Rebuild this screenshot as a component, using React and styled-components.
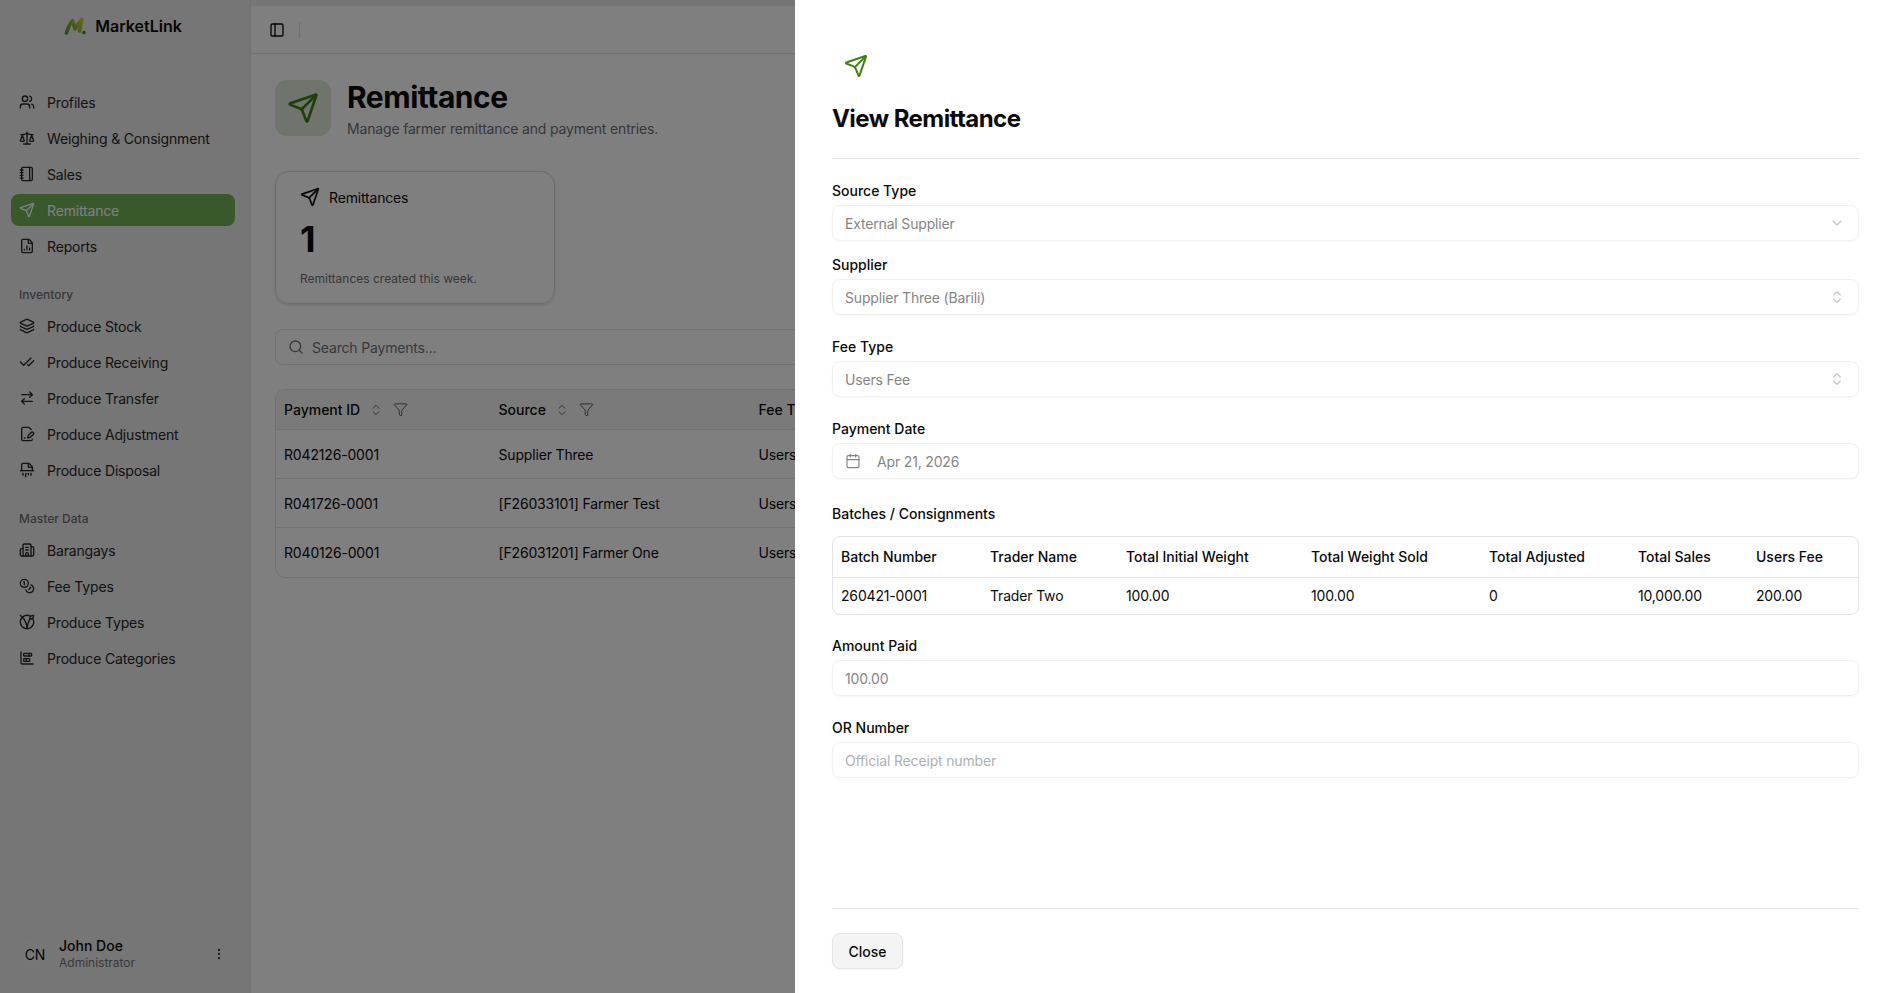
import React from 'react'
import styled, { createGlobalStyle } from 'styled-components'
import {
  ArrowRightLeft,
  Building2,
  Calendar,
  ChartBarStacked,
  CheckCheck,
  ChevronDown,
  ChevronsUpDown,
  Coins,
  EllipsisVertical,
  FileChartColumn,
  FilePenLine,
  Funnel,
  Layers,
  Notebook,
  PanelLeft,
  Scale,
  Search,
  Send,
  Shredder,
  Users,
  Vegan,
} from 'lucide-react'

const GlobalStyle = createGlobalStyle`
  html, body {
    margin: 0;
    height: 100%;
    overflow: hidden;
    background: #fff;
    color: #0a0a0a;
    font-family: Inter, "Liberation Sans", sans-serif;
    font-size: 14px;
    letter-spacing: -0.17px;
  }
  * {
    box-sizing: border-box;
  }
`

const green = '#3f7f14'

const Page = styled.div`
  display: flex;
  height: 100vh;
  background: #ececec;
`

const Sidebar = styled.aside`
  display: flex;
  flex-direction: column;
  flex: 0 0 251px;
  padding: 0 15px 0 11px;
  border-right: 1px solid #e4e4e4;
`

const Brand = styled.div`
  display: flex;
  align-items: center;
  justify-content: center;
  gap: 9px;
  height: 52px;
  margin-bottom: 34px;
  font-size: 16px;
  font-weight: 600;
  letter-spacing: 0;
`

const NavGroup = styled.nav`
  display: flex;
  flex-direction: column;
  gap: 4px;
  margin-bottom: ${(p) => p.$gap || 16}px;
`

const GroupLabel = styled.div`
  display: flex;
  align-items: center;
  height: 32px;
  padding-left: 8px;
  font-size: 12px;
  font-weight: 500;
  letter-spacing: 0;
  color: #6f6f76;
`

const NavItem = styled.a`
  display: flex;
  align-items: center;
  gap: 12px;
  height: 32px;
  padding-left: 8px;
  border-radius: 8px;
  font-size: 14px;
  color: ${(p) => (p.$active ? '#fff' : '#27272a')};
  background: ${(p) => (p.$active ? '#74b257' : 'transparent')};
`

const UserRow = styled.div`
  display: flex;
  align-items: center;
  height: 48px;
  margin-top: auto;
  margin-bottom: 15px;
  padding: 0 8px;
`

const Avatar = styled.div`
  display: flex;
  align-items: center;
  justify-content: center;
  flex: 0 0 32px;
  height: 32px;
  margin-right: 8px;
  border-radius: 50%;
  background: #eeeeee;
  font-size: 14px;
`

const UserText = styled.div`
  display: flex;
  flex-direction: column;
  flex: 1;
`

const UserName = styled.span`
  font-size: 14px;
  font-weight: 500;
  line-height: 18px;
  letter-spacing: 0;
`

const UserRole = styled.span`
  font-size: 12px;
  line-height: 16px;
  letter-spacing: 0;
  color: #71717a;
`

const MoreButton = styled.span`
  display: flex;
  margin-right: 1px;
  color: #3f3f46;
`

const Main = styled.main`
  display: flex;
  flex-direction: column;
  flex: 1;
  min-width: 0;
  margin-top: 6px;
  background: #fff;
`

const Topbar = styled.header`
  display: flex;
  align-items: center;
  flex: 0 0 48px;
  padding-left: 18px;
  border-bottom: 1px solid #e4e4e7;
`

const Separator = styled.span`
  width: 1px;
  height: 16px;
  margin-left: 14px;
  background: #e4e4e7;
`

const Content = styled.div`
  display: flex;
  flex-direction: column;
  padding: 26px 24px 0;
`

const PageHead = styled.div`
  display: flex;
  gap: 16px;
  height: 56px;
  margin-bottom: 35px;
`

const PageIcon = styled.div`
  display: flex;
  align-items: center;
  justify-content: center;
  flex: 0 0 56px;
  border-radius: 12px;
  background: #dfe8d8;
  color: ${green};
`

const PageTitle = styled.h1`
  margin: -1px 0 0;
  font-size: 30px;
  font-weight: 700;
  line-height: 36px;
  letter-spacing: -0.48px;
`

const PageSub = styled.p`
  margin: 4px 0 0;
  font-size: 14px;
  line-height: 20px;
  color: #6f6f76;
`

const StatCard = styled.section`
  display: flex;
  flex-direction: column;
  width: 280px;
  height: 133px;
  margin-bottom: 25px;
  padding: 15px 24px;
  border: 1.5px solid #dcdcde;
  border-radius: 14px;
  box-shadow: 0 1px 3px rgba(0, 0, 0, 0.14);
`

const StatHead = styled.div`
  display: flex;
  align-items: center;
  gap: 9px;
  height: 20px;
`

const StatValue = styled.div`
  margin-top: 12px;
  font-size: 36px;
  font-weight: 700;
  line-height: 40px;
`

const StatNote = styled.div`
  margin-top: 12px;
  font-size: 12px;
  line-height: 16px;
  letter-spacing: 0;
  color: #6f6f76;
`

const SearchBox = styled.div`
  display: flex;
  align-items: center;
  gap: 8px;
  height: 36px;
  margin-bottom: 24px;
  padding-left: 12px;
  border: 1px solid #e4e4e7;
  border-radius: 8px;
  color: #71717a;
`

const DataTable = styled.div`
  overflow: hidden;
  border: 1px solid #e4e4e7;
  border-radius: 10px;
`

const DataRow = styled.div`
  display: grid;
  grid-template-columns: 214.5px 260px 1fr;
  align-items: center;
  height: ${(p) => (p.$head ? 40 : 49)}px;
  border-bottom: ${(p) => (p.$last ? 0 : 1)}px solid #e4e4e7;
  background: ${(p) => (p.$head ? '#f5f5f5' : 'transparent')};
  font-weight: ${(p) => (p.$head ? 500 : 400)};
  letter-spacing: ${(p) => (p.$head ? '0' : '-0.17px')};
`

const DataCell = styled.div`
  display: flex;
  align-items: center;
  padding-left: 8px;
  white-space: nowrap;
`

const HeadIcons = styled.span`
  display: inline-flex;
  align-items: center;
  gap: 10px;
  margin-left: 9px;
  color: #52525b;
`

const Backdrop = styled.div`
  position: fixed;
  inset: 0;
  background: rgba(0, 0, 0, 0.5);
`

const Sheet = styled.aside`
  position: fixed;
  top: 0;
  right: 0;
  bottom: 0;
  display: flex;
  flex-direction: column;
  width: 1100px;
  padding: 42px 36px 24px 37px;
  background: #fff;
`

const SheetHead = styled.div`
  display: flex;
  flex-direction: column;
  padding-bottom: 23px;
  border-bottom: 1px solid #e4e4e7;
`

const SheetIcon = styled.div`
  display: flex;
  align-items: center;
  justify-content: center;
  width: 48px;
  height: 48px;
  color: ${green};
`

const SheetTitle = styled.h2`
  margin: 13px 0 0;
  font-size: 24px;
  font-weight: 700;
  line-height: 32px;
  letter-spacing: -0.56px;
`

const Form = styled.div`
  display: flex;
  flex-direction: column;
  flex: 1;
  padding-top: 24px;
`

const Field = styled.div`
  display: flex;
  flex-direction: column;
  gap: 7px;
  padding-top: 1px;
  margin-bottom: ${(p) => p.$gap}px;
`

const FieldLabel = styled.label`
  font-size: 14px;
  font-weight: 500;
  line-height: 14px;
  letter-spacing: 0;
`

const Control = styled.div`
  display: flex;
  align-items: center;
  justify-content: space-between;
  height: 36px;
  padding: 0 13px 0 12px;
  border: 1px solid #f1f1f2;
  border-radius: 8px;
  box-shadow: 0 1px 2px rgba(0, 0, 0, 0.03);
  color: ${(p) => (p.$placeholder ? '#b0b0b4' : '#858585')};
`

const ControlIcon = styled.span`
  display: flex;
  color: #c4c4c4;
`

const DateValue = styled.span`
  display: flex;
  align-items: center;
  gap: 16px;
`

const SectionLabel = styled.div`
  margin-top: 1px;
  margin-bottom: 12px;
  font-size: 14px;
  font-weight: 500;
  line-height: 20px;
  letter-spacing: 0;
`

const BatchWrap = styled.div`
  margin-bottom: 23px;
  overflow: hidden;
  border: 1px solid #e4e4e7;
  border-radius: 8px;
`

const BatchTable = styled.table`
  width: 100%;
  border-collapse: collapse;
  table-layout: fixed;
`

const BatchHead = styled.th`
  height: 40px;
  padding: 0 8px;
  border-bottom: 1px solid #e4e4e7;
  font-size: 14px;
  font-weight: 500;
  letter-spacing: 0;
  text-align: left;
`

const BatchCell = styled.td`
  height: 37px;
  padding: 0 8px;
  font-size: 14px;
`

const SheetFoot = styled.div`
  padding-top: 24px;
  border-top: 1px solid #e4e4e7;
`

const CloseButton = styled.button`
  width: 71px;
  height: 36px;
  border: 1px solid #e4e4e7;
  border-radius: 8px;
  background: #f4f4f5;
  box-shadow: 0 1px 2px rgba(0, 0, 0, 0.05);
  color: #0a0a0a;
  font-family: inherit;
  font-size: 14px;
  font-weight: 500;
  letter-spacing: 0;
`

const mainNav = [
  [Users, 'Profiles'],
  [Scale, 'Weighing & Consignment'],
  [Notebook, 'Sales'],
  [Send, 'Remittance', true],
  [FileChartColumn, 'Reports'],
]

const inventoryNav = [
  [Layers, 'Produce Stock'],
  [CheckCheck, 'Produce Receiving'],
  [ArrowRightLeft, 'Produce Transfer'],
  [FilePenLine, 'Produce Adjustment'],
  [Shredder, 'Produce Disposal'],
]

const masterNav = [
  [Building2, 'Barangays'],
  [Coins, 'Fee Types'],
  [Vegan, 'Produce Types'],
  [ChartBarStacked, 'Produce Categories'],
]

const payments = [
  ['R042126-0001', 'Supplier Three', 'Users Fee'],
  ['R041726-0001', '[F26033101] Farmer Test', 'Users Fee'],
  ['R040126-0001', '[F26031201] Farmer One', 'Users Fee'],
]

const batchColumns = [
  ['Batch Number', '260421-0001', 149],
  ['Trader Name', 'Trader Two', 136],
  ['Total Initial Weight', '100.00', 185],
  ['Total Weight Sold', '100.00', 178],
  ['Total Adjusted', '0', 149],
  ['Total Sales', '10,000.00', 118],
  ['Users Fee', '200.00', 110],
]

function Logo() {
  return (
    <svg width="22" height="18" viewBox="0 0 22 18" fill="none">
      <defs>
        <linearGradient id="logoFill" x1="0" y1="1" x2="1" y2="0">
          <stop offset="0" stopColor="#4c9c3c" />
          <stop offset="0.55" stopColor="#8fb83a" />
          <stop offset="1" stopColor="#dcc83a" />
        </linearGradient>
      </defs>
      <path
        d="M2.5 16 C4 11 6 6 8.5 3.5 C9.5 7 10.5 10 11 12 C13 9 15 5 18 2.5 C17 7 16 10 15.5 14"
        stroke="url(#logoFill)"
        strokeWidth="3.6"
        strokeLinecap="round"
        strokeLinejoin="round"
      />
      <circle cx="20" cy="15.5" r="1.8" fill="#3f8a2a" />
    </svg>
  )
}

function NavList({ items, gap }) {
  return (
    <NavGroup $gap={gap}>
      {items.map(([Icon, label, active]) => (
        <NavItem key={label} $active={active}>
          <Icon size={16} />
          {label}
        </NavItem>
      ))}
    </NavGroup>
  )
}

function HeadCell({ label, icons }) {
  return (
    <DataCell>
      {label}
      {icons && (
        <HeadIcons>
          <ChevronsUpDown size={14} strokeWidth={1.5} />
          <Funnel size={15} strokeWidth={1.5} />
        </HeadIcons>
      )}
    </DataCell>
  )
}

function SelectField({ label, value, icon: Icon, gap }) {
  return (
    <Field $gap={gap}>
      <FieldLabel>{label}</FieldLabel>
      <Control>
        {value}
        <ControlIcon>
          <Icon size={16} strokeWidth={1.75} />
        </ControlIcon>
      </Control>
    </Field>
  )
}

export default function App() {
  return (
    <>
      <GlobalStyle />
      <Page>
        <Sidebar>
          <Brand>
            <Logo />
            MarketLink
          </Brand>
          <NavList items={mainNav} />
          <GroupLabel>Inventory</GroupLabel>
          <NavList items={inventoryNav} />
          <GroupLabel>Master Data</GroupLabel>
          <NavList items={masterNav} gap={1} />
          <UserRow>
            <Avatar>CN</Avatar>
            <UserText>
              <UserName>John Doe</UserName>
              <UserRole>Administrator</UserRole>
            </UserText>
            <MoreButton>
              <EllipsisVertical size={14} />
            </MoreButton>
          </UserRow>
        </Sidebar>
        <Main>
          <Topbar>
            <PanelLeft size={16} />
            <Separator />
          </Topbar>
          <Content>
            <PageHead>
              <PageIcon>
                <Send size={32} />
              </PageIcon>
              <div>
                <PageTitle>Remittance</PageTitle>
                <PageSub>Manage farmer remittance and payment entries.</PageSub>
              </div>
            </PageHead>
            <StatCard>
              <StatHead>
                <Send size={20} />
                Remittances
              </StatHead>
              <StatValue>1</StatValue>
              <StatNote>Remittances created this week.</StatNote>
            </StatCard>
            <SearchBox>
              <Search size={16} />
              Search Payments...
            </SearchBox>
            <DataTable>
              <DataRow $head>
                <HeadCell label="Payment ID" icons />
                <HeadCell label="Source" icons />
                <HeadCell label="Fee Type" />
              </DataRow>
              {payments.map((row, i) => (
                <DataRow key={row[0]} $last={i === payments.length - 1}>
                  {row.map((text) => (
                    <DataCell key={text}>{text}</DataCell>
                  ))}
                </DataRow>
              ))}
            </DataTable>
          </Content>
        </Main>
      </Page>
      <Backdrop />
      <Sheet>
        <SheetHead>
          <SheetIcon>
            <Send size={24} />
          </SheetIcon>
          <SheetTitle>View Remittance</SheetTitle>
        </SheetHead>
        <Form>
          <SelectField label="Source Type" value="External Supplier" icon={ChevronDown} gap={16} />
          <SelectField label="Supplier" value="Supplier Three (Barili)" icon={ChevronsUpDown} gap={24} />
          <SelectField label="Fee Type" value="Users Fee" icon={ChevronsUpDown} gap={24} />
          <Field $gap={24}>
            <FieldLabel>Payment Date</FieldLabel>
            <Control>
              <DateValue>
                <ControlIcon>
                  <Calendar size={16} color="#858585" strokeWidth={1.75} />
                </ControlIcon>
                Apr 21, 2026
              </DateValue>
            </Control>
          </Field>
          <SectionLabel>Batches / Consignments</SectionLabel>
          <BatchWrap>
            <BatchTable>
              <colgroup>
                {batchColumns.map(([name, , width]) => (
                  <col key={name} width={width} />
                ))}
              </colgroup>
              <thead>
                <tr>
                  {batchColumns.map(([name]) => (
                    <BatchHead key={name}>{name}</BatchHead>
                  ))}
                </tr>
              </thead>
              <tbody>
                <tr>
                  {batchColumns.map(([name, value]) => (
                    <BatchCell key={name}>{value}</BatchCell>
                  ))}
                </tr>
              </tbody>
            </BatchTable>
          </BatchWrap>
          <Field $gap={24}>
            <FieldLabel>Amount Paid</FieldLabel>
            <Control>100.00</Control>
          </Field>
          <Field $gap={0}>
            <FieldLabel>OR Number</FieldLabel>
            <Control $placeholder>Official Receipt number</Control>
          </Field>
        </Form>
        <SheetFoot>
          <CloseButton>Close</CloseButton>
        </SheetFoot>
      </Sheet>
    </>
  )
}
